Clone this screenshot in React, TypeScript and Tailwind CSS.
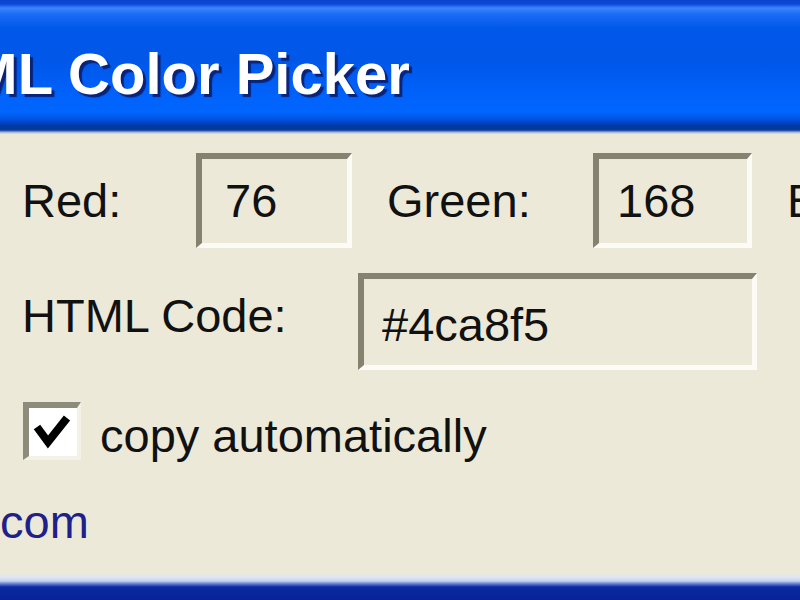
import React from 'react';

// XP-style sunken read-only field
function Field({ value, className }: { value: string; className: string }) {
  return (
    <div
      className={`shrink-0 flex items-center h-full bg-[#ece9d8] border-t-[6px] border-l-[6px] border-t-[#85836f] border-l-[#85836f] border-b-[5px] border-r-[5px] border-b-[#fcfbf5] border-r-[#fcfbf5] ${className}`}
    >
      <span className="leading-[46px]">{value}</span>
    </div>
  );
}

export default function App() {
  return (
    <div className="w-[800px] h-[600px] overflow-hidden bg-[#ece9d8] flex flex-col font-['Liberation_Sans',Arial,sans-serif] text-[47px] text-[#111]">
      {/* Title bar */}
      <div className="h-[134px] shrink-0 overflow-hidden bg-[linear-gradient(to_bottom,#0a44cc_0px,#0a48d6_4px,#3a86ff_8px,#1d6cf6_14px,#0058ea_28px,#0057e8_60px,#0062fb_95px,#0066ff_112px,#0050dc_120px,#0038a4_126px,#0a3a9a_130px,#c9d6ea_133px)]">
        <div className="pt-[45px] ml-[-108px] whitespace-nowrap font-bold text-[58px] leading-[58px] text-white [text-shadow:3px_3px_1px_#0a2378]">
          HTML Color Picker
        </div>
      </div>

      {/* Body */}
      <div className="flex-1 flex flex-col pt-[19px]">
        {/* RGB values */}
        <div className="flex items-start h-[95px]">
          <span className="shrink-0 w-[174px] ml-[22px] mt-[25px] leading-[46px]">Red:</span>
          <Field value="76" className="w-[156px] pl-[23px]" />
          <span className="shrink-0 w-[206px] ml-[35px] mt-[25px] leading-[46px]">Green:</span>
          <Field value="168" className="w-[159px] pl-[18px]" />
          <span className="shrink-0 ml-[35px] mt-[25px] leading-[46px] whitespace-nowrap">Blue:</span>
        </div>

        {/* HTML code */}
        <div className="flex items-start h-[97px] mt-[25px]">
          <span className="shrink-0 w-[336px] ml-[22px] mt-[20px] leading-[46px]">HTML Code:</span>
          <Field value="#4ca8f5" className="w-[399px] pl-[18px] pt-[6px]" />
        </div>

        {/* Copy option */}
        <div className="flex items-start mt-[32px]">
          <div className="relative shrink-0 ml-[23px] w-[58px] h-[58px] bg-white border-t-[6px] border-l-[6px] border-t-[#8d8b7c] border-l-[#8d8b7c] border-b-[4px] border-r-[4px] border-b-[#f4f2e8] border-r-[#f4f2e8]">
            <svg className="absolute -left-[6px] -top-[6px]" width="58" height="58" viewBox="0 0 58 58">
              <polyline
                points="14,25 25,40 44,16"
                fill="none"
                stroke="#000"
                strokeWidth="8"
                strokeLinejoin="miter"
              />
            </svg>
          </div>
          <span className="ml-[19px] mt-[11px] leading-[46px] whitespace-nowrap">copy automatically</span>
        </div>

        {/* Link */}
        <div className="mt-[39px] leading-[46px] text-[#20208a]">com</div>
      </div>

      {/* Bottom frame edge */}
      <div className="h-[27px] shrink-0 bg-[linear-gradient(to_bottom,#ece9d8_0px,#dfe6f0_4px,#c4d4f0_8px,#5a7ad0_11px,#0a2a9e_14px,#08229a_27px)]" />
    </div>
  );
}
